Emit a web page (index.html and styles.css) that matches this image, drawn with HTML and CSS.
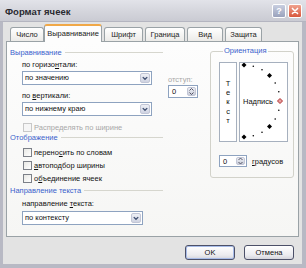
FILE: index.html
```html
<!DOCTYPE html>
<html lang="ru">
<head>
<meta charset="utf-8">
<title>Формат ячеек</title>
<link rel="stylesheet" href="styles.css">
</head>
<body>
<div class="window">
  <div class="titlebar">
    <span class="title">Формат ячеек</span>
    <div class="caption-btns">
      <span class="cbtn help">?</span>
      <span class="cbtn close"><svg width="14" height="14" viewBox="0 0 14 14"><path d="M4 4 L10 10 M10 4 L4 10" stroke="#fff" stroke-width="1.8" stroke-linecap="round"/></svg></span>
    </div>
  </div>
  <div class="frame">
    <div class="tabs">
      <div class="tab w1">Число</div>
      <div class="tab active w2">Выравнивание</div>
      <div class="tab w3">Шрифт</div>
      <div class="tab w4">Граница</div>
      <div class="tab w5">Вид</div>
      <div class="tab w6">Защита</div>
    </div>
    <div class="panel">
      <div class="left">
        <div class="ghead"><span class="glabel">Выравнивание</span><span class="gline"></span></div>
        <div class="align-body">
          <div class="col1">
            <div class="lbl l1">по горизо<u>н</u>тали:</div>
            <div class="combo c1"><span class="val">по значению</span><span class="dd"><svg width="9" height="10" viewBox="0 0 9 10"><path d="M2 4 L4.5 6.5 L7 4" fill="none" stroke="#3f4f70" stroke-width="1.5"/></svg></span></div>
            <div class="lbl l2">по <u>в</u>ертикали:</div>
            <div class="combo c2"><span class="val">по нижнему краю</span><span class="dd"><svg width="9" height="10" viewBox="0 0 9 10"><path d="M2 4 L4.5 6.5 L7 4" fill="none" stroke="#3f4f70" stroke-width="1.5"/></svg></span></div>
          </div>
          <div class="col2">
            <div class="lbl disabled">отступ:</div>
            <div class="spin s1"><span class="val">0</span><span class="sb"><svg width="7" height="11" viewBox="0 0 7 11"><path d="M1.5 4.5 L3.5 2.5 L5.5 4.5 M1.5 6.5 L3.5 8.5 L5.5 6.5" fill="none" stroke="#556" stroke-width="1"/></svg></span></div>
          </div>
        </div>
        <div class="cbrow dis-row"><span class="cb cb-dis"></span><span class="disabled">Распределять по ширине</span></div>
        <div class="ghead"><span class="glabel">Отображение</span><span class="gline"></span></div>
        <div class="cbrow first"><span class="cb"></span><span>перено<u>с</u>ить по словам</span></div>
        <div class="cbrow"><span class="cb"></span><span><u>а</u>втоподбор ширины</span></div>
        <div class="cbrow"><span class="cb"></span><span>о<u>б</u>ъединение ячеек</span></div>
        <div class="ghead"><span class="glabel">Направление текста</span><span class="gline"></span></div>
        <div class="lbl l3">направление <u>т</u>екста:</div>
        <div class="combo c3"><span class="val">по контексту</span><span class="dd"><svg width="9" height="10" viewBox="0 0 9 10"><path d="M2 4 L4.5 6.5 L7 4" fill="none" stroke="#3f4f70" stroke-width="1.5"/></svg></span></div>
      </div>
      <fieldset class="orient">
        <legend>Ориентация</legend>
        <div class="orow">
          <div class="vtext"><span>Т</span><span>е</span><span>к</span><span>с</span><span>т</span></div>
          <div class="dial">
            <svg width="47" height="78" viewBox="0 0 47 78">
              <g fill="#000">
                <path d="M4 -0.5 L6.5 2 L4 4.5 L1.5 2 Z"/>
                <circle cx="13.3" cy="3.2" r="0.8"/>
                <circle cx="22" cy="6.8" r="0.8"/>
                <path d="M29.5 10 L32 12.5 L29.5 15 L27 12.5 Z"/>
                <circle cx="35.2" cy="20" r="0.8"/>
                <circle cx="38.8" cy="28.7" r="0.8"/>
                <circle cx="38.8" cy="47.3" r="0.8"/>
                <circle cx="35.2" cy="56" r="0.8"/>
                <path d="M29.5 61 L32 63.5 L29.5 66 L27 63.5 Z"/>
                <circle cx="22" cy="69.2" r="0.8"/>
                <circle cx="13.3" cy="72.8" r="0.8"/>
                <path d="M4 71.5 L6.5 74 L4 76.5 L1.5 74 Z"/>
              </g>
              <path d="M40 35.5 L42.5 38 L40 40.5 L37.5 38 Z" fill="#e8a0a0" stroke="#b03030" stroke-width="1"/>
              <text x="3" y="40.5" class="dial-text">Надпись</text>
            </svg>
          </div>
        </div>
        <div class="deg-row">
          <div class="spin s2"><span class="val">0</span><span class="sb"><svg width="7" height="10" viewBox="0 0 7 10"><path d="M1.5 4 L3.5 2 L5.5 4 M1.5 6 L3.5 8 L5.5 6" fill="none" stroke="#556" stroke-width="1"/></svg></span></div>
          <span class="deg-lbl"><u>г</u>радусов</span>
        </div>
      </fieldset>
    </div>
    <div class="buttons">
      <div class="btn default">OK</div>
      <div class="btn">Отмена</div>
    </div>
  </div>
</div>
</body>
</html>
```
FILE: styles.css
```css
* { box-sizing: border-box; }
html, body { margin: 0; padding: 0; }
body {
  width: 306px;
  height: 268px;
  overflow: hidden;
  background: #fff;
  font-family: "Liberation Sans", Arial, sans-serif;
  font-size: 7.5px;
  color: #111;
}
u { text-decoration: underline; }
.window {
  width: 306px;
  height: 268px;
  display: flex;
  flex-direction: column;
}
.titlebar {
  height: 22px;
  flex: none;
  display: flex;
  align-items: center;
  justify-content: space-between;
  background: linear-gradient(#e2e3e9, #d3d4db 60%, #cacbd3);
  border-bottom: 1px solid #b4b5c0;
  padding: 0 4px 0 5px;
}
.title {
  font-weight: bold;
  font-size: 9.5px;
  color: #2a2a30;
  padding-top: 2px;
}
.caption-btns { display: flex; gap: 2px; margin-top: 1px; }
.cbtn {
  width: 14px;
  height: 14px;
  border-radius: 2px;
  display: flex;
  align-items: center;
  justify-content: center;
  color: #fff;
  font-weight: bold;
  font-size: 9px;
}
.help {
  background: linear-gradient(#c8cee0, #9aa2bc);
  border: 1px solid #fff;
}
.close {
  background: linear-gradient(#f0a28e, #d8583e);
  border: 1px solid #fff;
}
.frame {
  flex: 1;
  display: flex;
  flex-direction: column;
  background: #e3e3e3;
  border-left: 3px solid #b8b9c4;
  border-right: 4px solid #b8b9c4;
  border-bottom: 4px solid #b8b9c4;
  padding: 2px 3px 0 3px;
}
.tabs {
  height: 17px;
  display: flex;
  align-items: flex-end;
  padding-left: 4px;
}
.tab {
  height: 14px;
  border: 1px solid #9aa2a6;
  border-bottom: none;
  border-radius: 3px 3px 0 0;
  background: linear-gradient(#ffffff, #ecebe8);
  display: flex;
  align-items: center;
  justify-content: center;
  margin-right: 2px;
  color: #222;
}
.tab.active {
  height: 18px;
  margin-bottom: -1px;
  position: relative;
  z-index: 1;
  background: #fdfdfd;
  border-top: 2px solid #f0a848;
  margin-right: 2px;
  padding-bottom: 2px;
}
.w1 { width: 34px; margin-right: 0; }
.w2 { width: 58px; }
.w3 { width: 39px; }
.w4 { width: 40px; }
.w5 { width: 36px; }
.w6 { width: 37px; }
.panel {
  height: 196px;
  border: 1px solid #9aa2a6;
  background: linear-gradient(#fdfdfd, #f6f6f4);
  display: flex;
  align-items: flex-start;
}
.left {
  width: 200px;
  margin-left: 3px;
  display: flex;
  flex-direction: column;
}
.ghead {
  width: 153px;
  height: 10px;
  display: flex;
  align-items: center;
}
.left > .ghead:first-child { margin-top: 5px; }
.glabel { color: #3a62cc; }
.gline {
  flex: 1;
  margin-left: 3px;
  border-top: 1px solid #d6d6ce;
}
.lbl { height: 10px; line-height: 10px; }
.disabled { color: #a8a8a8; }
.align-body {
  display: flex;
  padding-left: 12px;
}
.col1 { width: 130px; display: flex; flex-direction: column; }
.l1 { margin-top: 3px; }
.l2 { margin-top: 6px; }
.combo {
  height: 14px;
  margin-top: 1px;
  border: 1px solid #8ea3c0;
  background: #fff;
  display: flex;
  align-items: stretch;
}
.combo .val {
  flex: 1;
  padding-left: 2px;
  line-height: 12px;
}
.combo .dd {
  width: 10px;
  margin: 1px;
  border-radius: 2px;
  border: 1px solid #c2c6d6;
  background: linear-gradient(#eef0f6, #cfd3e2);
  display: flex;
  align-items: center;
  justify-content: center;
}
.col2 {
  margin-left: 16px;
  padding-top: 18px;
  display: flex;
  flex-direction: column;
}
.spin {
  border: 1px solid #8ea3c0;
  background: #fff;
  display: flex;
  align-items: stretch;
}
.spin .val { flex: 1; padding-left: 3px; display: flex; align-items: center; }
.spin .sb {
  width: 9px;
  margin: 1px;
  border-radius: 2px;
  background: linear-gradient(#eceef4, #c9cdd9);
  border: 1px solid #c2c6d6;
  display: flex;
  align-items: center;
  justify-content: center;
}
.s1 { width: 30px; height: 13px; }
.s2 { width: 28px; height: 12px; }
.cbrow {
  height: 13px;
  display: flex;
  align-items: center;
  padding-left: 13px;
}
.dis-row { height: 10px; margin-top: 6px; }
.cbrow.first { margin-top: 4px; }
.cb {
  width: 9px;
  height: 9px;
  border: 1px solid #7c8088;
  background: linear-gradient(135deg, #e8e8e4, #ffffff);
  margin-right: 2px;
  flex: none;
}
.cb-dis { border-color: #c8c8c8; background: #f6f6f6; }
.l3 { margin-top: 4px; margin-left: 12px; }
.c3 { width: 121px; margin-left: 12px; margin-top: 2px; }
.orient {
  width: 84px;
  margin: 4px 0 0 0;
  padding: 6px 5px 10px 8px;
  border: 1px solid #d2d2ca;
  border-radius: 3px;
  min-inline-size: 0;
}
.orient legend {
  padding: 0 1px;
  margin-left: 4px;
  line-height: 10px;
  color: #3a62cc;
}
.orow { display: flex; gap: 2px; }
.vtext {
  width: 18px;
  height: 80px;
  border: 1px solid #a6b0be;
  background: #fff;
  display: flex;
  flex-direction: column;
  align-items: center;
  justify-content: center;
  line-height: 9.3px;
}
.dial {
  width: 49px;
  height: 80px;
  border: 1px solid #a6b0be;
  background: #fff;
}
.dial svg { display: block; }
.dial-text { font-family: "Liberation Sans", Arial, sans-serif; font-size: 7.5px; fill: #111; }
.deg-row {
  margin-top: 13px;
  display: flex;
  align-items: center;
}
.deg-lbl { margin-left: 5px; }
.buttons {
  display: flex;
  justify-content: flex-end;
  gap: 9px;
  margin-top: 8px;
  padding-right: 5px;
}
.btn {
  width: 50px;
  height: 15px;
  border: 1px solid #4c5068;
  border-radius: 3px;
  background: linear-gradient(#ffffff, #ebebef 70%, #d4d5dc);
  display: flex;
  align-items: center;
  justify-content: center;
}
.btn.default {
  box-shadow: inset 0 0 0 1px #a8bce8;
}
```
